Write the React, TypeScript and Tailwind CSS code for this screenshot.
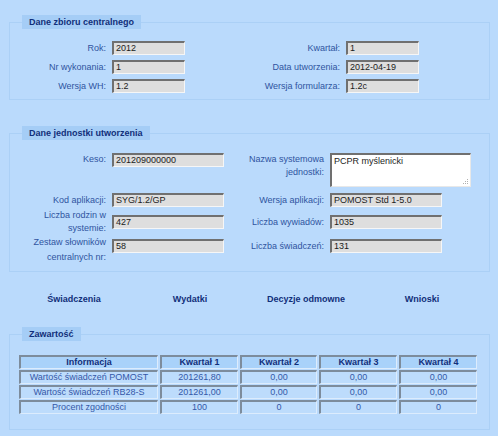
import React from "react";

const labelCls = "text-[9px] leading-[13px] text-[#2f54a0] text-right";

function Field({ value, w }: { value: string; w: string }) {
  return (
    <div
      className={`${w} h-[14px] shrink-0 bg-[#dedede] border-t-2 border-l-2 border-t-[#707070] border-l-[#707070] border-r border-b border-r-[#f6f6f6] border-b-[#f6f6f6] pl-[2px] text-[9px] leading-[11px] text-[#1c1c1c] whitespace-nowrap overflow-hidden`}
    >
      {value}
    </div>
  );
}

function Legend({ children, extra = "" }: { children: React.ReactNode; extra?: string }) {
  return (
    <legend
      className={`h-[14px] px-[7px] bg-[#a5cdf6] text-[9px] leading-[14px] font-bold text-[#112f7a] ${extra}`}
    >
      {children}
    </legend>
  );
}

function Cell({ children, head = false, w }: { children: React.ReactNode; head?: boolean; w: string }) {
  return (
    <div
      className={`${w} h-[14px] flex items-center justify-center border-t-2 border-l-2 border-t-[#7d8c9c] border-l-[#7d8c9c] border-r border-b border-r-[#dcecfd] border-b-[#dcecfd] text-[9px] leading-[11px] whitespace-nowrap ${
        head ? "bg-[#a9d2fa] font-bold text-[#112f7a]" : "bg-[#bddcfc] text-[#3458a8]"
      }`}
    >
      {children}
    </div>
  );
}

export default function App() {
  const cols = ["w-[139px]", "w-[78px]", "w-[77px]", "w-[78px]", "w-[78px]"];
  const rows = [
    ["Informacja", "Kwartał 1", "Kwartał 2", "Kwartał 3", "Kwartał 4"],
    ["Wartość świadczeń POMOST", "201261,80", "0,00", "0,00", "0,00"],
    ["Wartość świadczeń RB28-S", "201261,00", "0,00", "0,00", "0,00"],
    ["Procent zgodności", "100", "0", "0", "0"],
  ];
  return (
    <div className="w-[498px] h-[436px] overflow-hidden bg-[#badafc] pt-[15px] font-['Liberation_Sans',Arial,sans-serif]">
      {/* Fieldset 1 */}
      <fieldset className="ml-[9px] w-[481px] border border-[#abd0f6] px-[12px] pt-[12px] pb-[6px]">
        <Legend>Dane zbioru centralnego</Legend>
        <div className="flex flex-col gap-y-[5px]">
          {[
            ["Rok:", "2012", "Kwartał:", "1"],
            ["Nr wykonania:", "1", "Data utworzenia:", "2012-04-19"],
            ["Wersja WH:", "1.2", "Wersja formularza:", "1.2c"],
          ].map((r) => (
            <div key={r[0]} className="flex items-center h-[14px]">
              <div className={`${labelCls} w-[84px]`}>{r[0]}</div>
              <div className="w-[6px]" />
              <Field value={r[1]} w="w-[73px]" />
              <div className={`${labelCls} w-[155px]`}>{r[2]}</div>
              <div className="w-[6px]" />
              <Field value={r[3]} w="w-[73px]" />
            </div>
          ))}
        </div>
      </fieldset>

      {/* Fieldset 2 */}
      <fieldset className="ml-[9px] mt-[26px] w-[481px] border border-[#abd0f6] px-[12px] pt-[13px] pb-[7px]">
        <Legend>Dane jednostki utworzenia</Legend>
        <div className="flex flex-col">
          <div className="flex items-start h-[34px]">
            <div className={`${labelCls} w-[84px]`}>Keso:</div>
            <div className="w-[6px]" />
            <Field value="201209000000" w="w-[112px]" />
            <div className={`${labelCls} w-[100px]`}>
              Nazwa systemowa
              <br />
              jednostki:
            </div>
            <div className="w-[6px]" />
            <div className="relative w-[141px] h-[34px] bg-white border-t-2 border-l-2 border-t-[#707070] border-l-[#707070] border-r border-b border-r-[#e8e8e8] border-b-[#e8e8e8] pl-[2px] pt-[1px] text-[9px] leading-[11px] text-[#1c1c1c]">
              PCPR myślenicki
              <svg className="absolute right-[1px] bottom-[1px]" width="6" height="6" viewBox="0 0 6 6">
                <rect x="4" y="0" width="1" height="1" fill="#b0b0b0" />
                <rect x="2" y="2" width="1" height="1" fill="#b0b0b0" />
                <rect x="4" y="2" width="1" height="1" fill="#b0b0b0" />
                <rect x="0" y="4" width="1" height="1" fill="#b0b0b0" />
                <rect x="2" y="4" width="1" height="1" fill="#b0b0b0" />
                <rect x="4" y="4" width="1" height="1" fill="#b0b0b0" />
              </svg>
            </div>
          </div>
          <div className="flex items-center h-[14px] mt-[6px]">
            <div className={`${labelCls} w-[84px]`}>Kod aplikacji:</div>
            <div className="w-[6px]" />
            <Field value="SYG/1.2/GP" w="w-[112px]" />
            <div className={`${labelCls} w-[100px]`}>Wersja aplikacji:</div>
            <div className="w-[6px]" />
            <Field value="POMOST Std 1-5.0" w="w-[112px]" />
          </div>
          <div className="flex items-center h-[26px] mt-[2px]">
            <div className={`${labelCls} w-[84px]`}>
              Liczba rodzin w
              <br />
              systemie:
            </div>
            <div className="w-[6px]" />
            <Field value="427" w="w-[112px]" />
            <div className={`${labelCls} w-[100px]`}>Liczba wywiadów:</div>
            <div className="w-[6px]" />
            <Field value="1035" w="w-[112px]" />
          </div>
          <div className="flex items-start h-[29px]">
            <div className={`text-[9px] leading-[15px] text-[#2f54a0] text-right w-[84px]`}>
              Zestaw słowników
              <br />
              centralnych nr:
            </div>
            <div className="w-[6px]" />
            <div className="mt-[4px] flex items-center">
              <Field value="58" w="w-[112px]" />
              <div className={`${labelCls} w-[100px]`}>Liczba świadczeń:</div>
              <div className="w-[6px]" />
              <Field value="131" w="w-[112px]" />
            </div>
          </div>
        </div>
      </fieldset>

      {/* Links */}
      <div className="ml-[16px] w-[464px] h-[55px] grid grid-cols-4 items-center text-center text-[9px] font-bold text-[#112f7a]">
        <span>Świadczenia</span>
        <span>Wydatki</span>
        <span>Decyzje odmowne</span>
        <span>Wnioski</span>
      </div>

      {/* Fieldset 3 */}
      <fieldset className="ml-[9px] w-[481px] border border-[#abd0f6] pl-[9px] pr-[10px] pt-[14px] pb-[15px]">
        <Legend extra="ml-[3px]">Zawartość</Legend>
        <div className="flex flex-col gap-y-[1px]">
          {rows.map((r, i) => (
            <div key={i} className="flex gap-x-[2px]">
              {r.map((c, j) => (
                <Cell key={j} head={i === 0} w={cols[j]}>
                  {c}
                </Cell>
              ))}
            </div>
          ))}
        </div>
      </fieldset>
    </div>
  );
}
